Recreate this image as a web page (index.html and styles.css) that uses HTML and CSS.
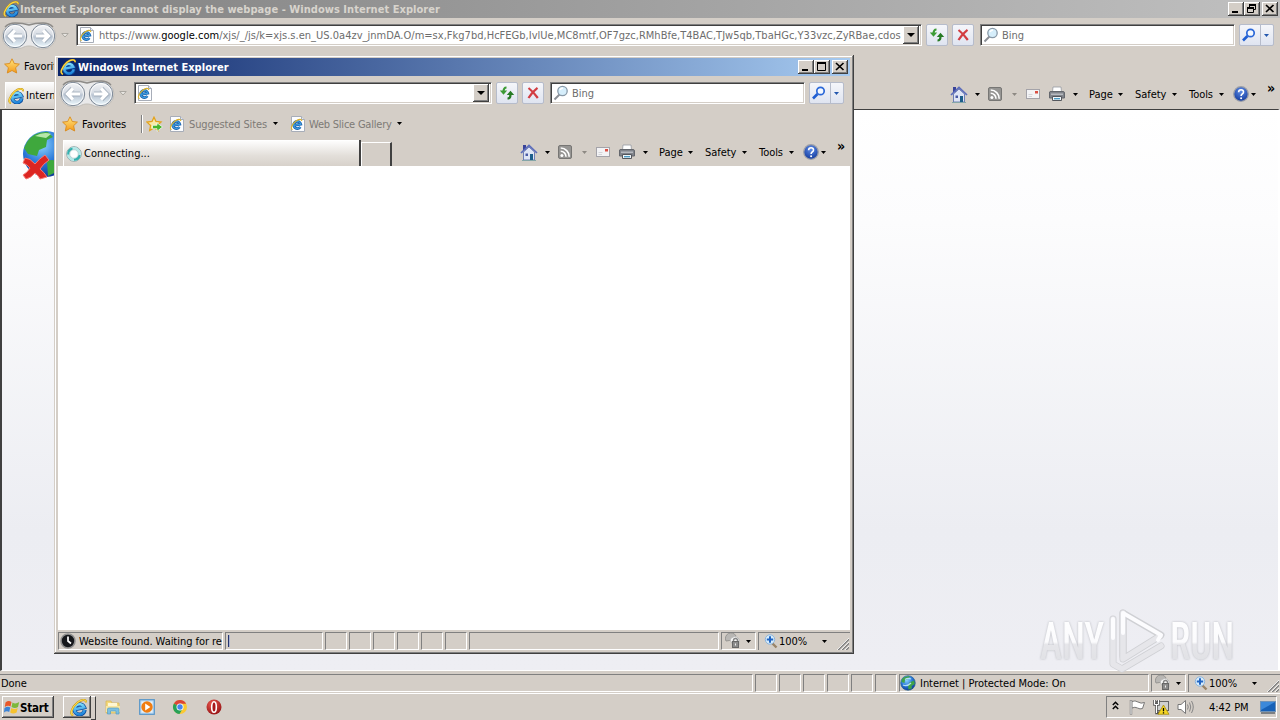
FILE: index.html
```html
<!DOCTYPE html>
<html lang="en">
<head>
<meta charset="utf-8">
<title>Windows Internet Explorer</title>
<link rel="stylesheet" href="styles.css">
</head>
<body>
<svg class="sprite" width="0" height="0" aria-hidden="true">
  <defs>
    <linearGradient id="gE" x1="0" y1="0" x2="0" y2="1"><stop offset="0" stop-color="#7fdcfb"/><stop offset="1" stop-color="#1f86dc"/></linearGradient>
    <linearGradient id="gBall" x1="0" y1="0" x2="0" y2="1"><stop offset="0" stop-color="#f4f5f7"/><stop offset=".45" stop-color="#d5dbe3"/><stop offset=".55" stop-color="#b9c4d2"/><stop offset="1" stop-color="#eefaff"/></linearGradient>
    <linearGradient id="gStar" x1="0" y1="0" x2="0" y2="1"><stop offset="0" stop-color="#ffe680"/><stop offset="1" stop-color="#f59a1a"/></linearGradient>
    <radialGradient id="gGlobe" cx=".4" cy=".3" r=".8"><stop offset="0" stop-color="#8fd4ff"/><stop offset=".5" stop-color="#2a78d8"/><stop offset="1" stop-color="#062a86"/></radialGradient>
    <radialGradient id="gHelp" cx=".5" cy=".3" r=".7"><stop offset="0" stop-color="#5f8de6"/><stop offset="1" stop-color="#123a9e"/></radialGradient>
    <radialGradient id="gOpera" cx=".4" cy=".3" r=".8"><stop offset="0" stop-color="#ee5a50"/><stop offset="1" stop-color="#8e0d10"/></radialGradient>
    <linearGradient id="gMark" x1="0" y1="0" x2="0" y2="1"><stop offset="0" stop-color="#ffffff"/><stop offset=".52" stop-color="#fbfbfd"/><stop offset=".56" stop-color="#e6e6ea"/><stop offset="1" stop-color="#dddee2"/></linearGradient>
  </defs>
  <symbol id="ie" viewBox="0 0 16 16">
    <g fill="none"><g transform="rotate(-12 8.500 9)"><path d="M13.400 11.300A4.800 4.800 0 1 1 13.500 8.900H4.500" stroke="#0a4a9a" stroke-width="3.700"/>
    <path d="M13.300 11.400A4.800 4.800 0 1 1 13.500 8.900H4.800" stroke="url(#gE)" stroke-width="2.400"/></g>
    <path d="M3 15.200C-.8 14.500 2 7.500 7 3.300C10.500.5 15 -.4 15.200 3.200" stroke="#b58b14" stroke-width="1.900"/>
    <path d="M3 15.200C-.8 14.500 2 7.500 7 3.300C10.500.5 15 -.4 15.200 3.200" stroke="#fbd645" stroke-width="1.200"/></g>
  </symbol>
  <symbol id="iepage" viewBox="0 0 16 16">
    <path d="M1.500.5H11.500L14.500 3.500V15.500H1.500Z" fill="#fcfdff" stroke="#a7adb8"/>
    <path d="M11.500.5V3.500H14.500" fill="#e4e8f0" stroke="#a7adb8"/>
    <g fill="none"><path d="M10.300 10.900A3.600 3.600 0 1 1 10.800 8.200L4 9.300" stroke="#155ba8" stroke-width="2.700"/><path d="M10.300 10.900A3.600 3.600 0 1 1 10.800 8.200L4 9.300" stroke="#3d9de0" stroke-width="1.200"/>
    <path d="M2.600 13.800C0 13 2 8 5.800 5.200C8.500 3.200 11.800 2.500 11.700 5" stroke="#dcb32c" stroke-width="1.200"/></g>
  </symbol>
  <symbol id="balls" viewBox="0 0 56 28">
    <path d="M14 1H42A13 13 0 0 1 42 27C34 27 34 24 28 24S22 27 14 27A13 13 0 0 1 14 1Z" fill="#e9e9ea" stroke="#c2beb8"/>
    <path d="M4 5Q8 1 14 1Q22 1 28 3Q34 1 42 1Q48 1 52 5" fill="none" stroke="#8d8b88" stroke-width="1.500"/>
    <g fill="url(#gBall)" stroke="#7c8794"><circle cx="14" cy="14" r="11.700"/><circle cx="42" cy="14" r="11.700"/></g>
    <g fill="none" stroke="#fff" stroke-width="1" opacity=".8"><circle cx="14" cy="14" r="10.500"/><circle cx="42" cy="14" r="10.500"/></g>
    <g fill="none" stroke="#8f9cab" stroke-width="5" opacity=".6"><path d="M21 14H9M13.500 8.500L8.500 14L13.500 19.500M35 14H47M42.500 8.500L47.500 14L42.500 19.500"/></g>
    <g fill="none" stroke="#fff" stroke-width="3.200"><path d="M21 14H9M14 8.500L8.500 14L14 19.500M35 14H47M42 8.500L47.500 14L42 19.500"/></g>
  </symbol>
  <symbol id="caret" viewBox="0 0 5 3"><path d="M0 0H5L2.500 3Z" fill="currentColor"/></symbol>
  <symbol id="bigcaret" viewBox="0 0 8 4"><path d="M0 0H8L4 4Z" fill="currentColor"/></symbol>
  <symbol id="hist" viewBox="0 0 8 5"><path d="M.8.5H7.200L4 4Z" fill="#e8e6e2" stroke="#aaa7a1"/></symbol>
  <symbol id="refresh" viewBox="0 0 16 16">
    <path d="M7.500 2.500Q4.500 2.500 4.500 7" fill="none" stroke="#3c9b35" stroke-width="2.200"/><path d="M.8 5.500H8.200L4.500 9.800Z" fill="#3c9b35"/>
    <path d="M8.500 13.500Q11.500 13.500 11.500 9.500" fill="none" stroke="#267a24" stroke-width="2.200"/><path d="M7.800 10H15.200L11.500 5.700Z" fill="#267a24"/>
  </symbol>
  <symbol id="stop" viewBox="0 0 16 16"><path d="M3.500 3Q8 6.500 12.800 13M12.500 2.800Q7 7 3.500 13" fill="none" stroke="#d23d42" stroke-width="2.200"/></symbol>
  <symbol id="lens" viewBox="0 0 16 16"><path d="M1.500 14.500L6.500 9.500" stroke="#8b8f96" stroke-width="2"/><circle cx="9.500" cy="6" r="4.700" fill="#d6eefb" stroke="#8899a8" stroke-width="1.300"/><path d="M7 5Q8 3 10 3" fill="none" stroke="#fff" stroke-width="1.500"/></symbol>
  <symbol id="find" viewBox="0 0 16 16"><path d="M2 13.500L6.500 9" stroke="#1f5ed2" stroke-width="2.600"/><circle cx="9.500" cy="6" r="3.700" fill="#f3f8ff" stroke="#2b68d8" stroke-width="1.700"/></symbol>
  <symbol id="star" viewBox="0 0 16 16"><path d="M8 .8L10.300 5.500L15.400 6.100L11.600 9.700L12.700 15L8 12.500L3.300 15L4.400 9.700L.6 6.100L5.700 5.500Z" fill="url(#gStar)" stroke="#d98a1d" stroke-width=".9"/></symbol>
  <symbol id="staradd" viewBox="0 0 17 16"><path d="M8 1.200L10 5.500L15 6.100L11.300 9.500L12.300 14.500L8 12L3.700 14.500L4.600 9.500L1 6.100L6 5.500Z" fill="#f9e9a6" stroke="#e3a21b" stroke-width="1.300"/><path d="M6.500 9.300H11V6.800L16.500 11L11 15.300V12.700H6.500Z" fill="#49b52c" stroke="#fff" stroke-width=".7"/></symbol>
  <symbol id="home" viewBox="0 0 18 17">
    <path d="M3 1H6V6H3Z" fill="#39439a"/><path d="M3.500 8L9 3L14.500 8V16H3.500Z" fill="#dfe5f5" stroke="#6f7fb6"/>
    <path d="M1 9L9 1.500L17 9" fill="none" stroke="#5b6cbb" stroke-width="1.700"/><path d="M10 10H13V16H10Z" fill="#1d5e8b"/><path d="M5.500 9.500H8V12H5.500Z" fill="#4a5aa5"/><path d="M2 16.500H16" stroke="#85a6a8"/>
  </symbol>
  <symbol id="rss" viewBox="0 0 16 16"><rect x="1.500" y="1.500" width="13" height="13" rx="1.500" fill="#969593" stroke="#777674"/><circle cx="4.900" cy="11.500" r="1.500" fill="#fff"/><path d="M3.700 7.300A5.300 5.300 0 0 1 9 12.700M3.700 4A8.600 8.600 0 0 1 12.200 12.700" fill="none" stroke="#fff" stroke-width="1.600"/></symbol>
  <symbol id="mail" viewBox="0 0 14 12"><rect x=".5" y="1.500" width="13" height="9" fill="#f3f3f5" stroke="#a4a3a9"/><path d="M9 3H12V5.500H9Z" fill="#da4f43"/><path d="M2.500 6.500H6.500M2.500 8.500H6" stroke="#d3d4d9"/></symbol>
  <symbol id="print" viewBox="0 0 18 16"><path d="M5 1H13L13.500 6H4.500Z" fill="#fff" stroke="#9599a1" stroke-width=".8"/><path d="M1.500 6Q1.500 5.500 3 5.500H15Q16.500 5.500 16.500 7V12H1.500Z" fill="#80848b" stroke="#64676d"/><path d="M3 8.200H15" stroke="#c6c9ce" stroke-width="1.200"/><path d="M4.500 10.500H13.500V14.500H4.500Z" fill="#f0f7fb" stroke="#54575d"/><path d="M6 12.700H12" stroke="#4396c1" stroke-width="1.300"/></symbol>
  <symbol id="help" viewBox="0 0 16 16"><circle cx="8" cy="8" r="7.300" fill="url(#gHelp)" stroke="#9c9fa8" stroke-width="1.300"/><path d="M5.600 6.200Q5.700 3.800 8.100 3.800T10.500 6Q10.500 7.200 9.200 8Q8.100 8.700 8.100 10" fill="none" stroke="#fff" stroke-width="1.600"/><circle cx="8.100" cy="12.200" r="1" fill="#fff"/></symbol>
  <symbol id="spin" viewBox="0 0 16 16"><circle cx="8" cy="8" r="7.300" fill="#e8f6f6" stroke="#8ea5a8" stroke-width="1"/><circle cx="8" cy="8" r="5.700" fill="none" stroke="#b4e9e8" stroke-width="2.400"/><path d="M2.300 8.500A5.700 5.700 0 0 1 6.500 2.500M13.600 9A5.700 5.700 0 0 1 8 13.700" fill="none" stroke="#35b0ae" stroke-width="2.200"/><circle cx="8" cy="8" r="4.300" fill="#fff" stroke="#9fc3c4" stroke-width=".7"/></symbol>
  <symbol id="clock" viewBox="0 0 16 16"><circle cx="8" cy="8" r="7" fill="#15171b" stroke="#8f8f8f" stroke-width="1.600"/><path d="M8 3.500V8L11 10.500" fill="none" stroke="#fff" stroke-width="1.700"/></symbol>
  <symbol id="lock" viewBox="0 0 16 16"><path d="M1 8A5.500 5.500 0 0 1 11 3L8 7Z" fill="#b9b7b4" stroke="#989693"/><path d="M5 7A5 5 0 0 1 14 6V12H8Z" fill="#f6f6f5" stroke="#bbb"/><path d="M8.500 8.500V7.500A2 2 0 0 1 12.500 7.500V8.500" fill="none" stroke="#858585" stroke-width="1.400"/><rect x="7.500" y="8.500" width="6" height="6" fill="#8b8b8b" stroke="#676767"/><path d="M10.500 10.500V12.500" stroke="#eee"/></symbol>
  <symbol id="zoomin" viewBox="0 0 14 15"><path d="M8 9L12.500 13.500" stroke="#9a8468" stroke-width="2.400"/><circle cx="6" cy="5.500" r="4.700" fill="#d9edfb" stroke="#8bb4dc"/><path d="M6 2.300V8.700M2.800 5.500H9.200" stroke="#2165c3" stroke-width="2"/></symbol>
  <symbol id="globe" viewBox="0 0 16 16"><circle cx="8" cy="8" r="7.300" fill="url(#gGlobe)" stroke="#1c5a8a" stroke-width=".6"/><path d="M2 4Q5 .6 10 1.300L8 4L5 5L4.500 8L1.500 7ZM9.500 7.500L14 5.500L14.800 9L11.500 11L12 13.300L8.500 14.500L8 10.500Z" fill="#3fa347"/><path d="M3 10Q7 12 11 8M5 4.500Q8 2.500 11 4" fill="none" stroke="#b2def6" stroke-width="1.200"/></symbol>
  <symbol id="grip" viewBox="0 0 12 12"><path d="M1 12L12 1M5 12L12 5M9 12L12 9" stroke="#808080" stroke-width="1.600"/><path d="M0 12L12 0M4 12L12 4M8 12L12 8" stroke="#fff" stroke-width=".8"/></symbol>
  <symbol id="min" viewBox="0 0 12 11"><path d="M2 9H8" stroke="#000" stroke-width="2"/></symbol>
  <symbol id="max" viewBox="0 0 12 11"><path d="M1.500 1V9.500H9.500V1" fill="none" stroke="#000"/><path d="M1 2H10" stroke="#000" stroke-width="2"/></symbol>
  <symbol id="restore" viewBox="0 0 12 11"><path d="M3.500 4V2.500H9.500V6.500H7M1.500 5V9.500H7.500V5" fill="none" stroke="#000"/><path d="M3 2H10M1 5H8" stroke="#000" stroke-width="2"/></symbol>
  <symbol id="close" viewBox="0 0 12 11"><path d="M2 2L9.500 9M9.500 2L2 9" stroke="#000" stroke-width="1.700"/></symbol>
</svg>

<main class="desktop">
  <section class="window back">
    <header class="title inactive"><svg class="i16"><use href="#ie"/></svg><b>Internet Explorer cannot display the webpage - Windows Internet Explorer</b>
      <span class="wb"><svg><use href="#min"/></svg></span><span class="wb"><svg><use href="#restore"/></svg></span><span class="wb last"><svg><use href="#close"/></svg></span></header>
    <div class="nav">
      <svg class="balls"><use href="#balls"/></svg><svg class="hist"><use href="#hist"/></svg>
      <div class="field address"><svg class="i16"><use href="#iepage"/></svg><span class="url">https://www.<i>google.com</i>/xjs/_/js/k=xjs.s.en_US.0a4zv_jnmDA.O/m=sx,Fkg7bd,HcFEGb,IvlUe,MC8mtf,OF7gzc,RMhBfe,T4BAC,TJw5qb,TbaHGc,Y33vzc,ZyRBae,cdos</span><span class="drop"><svg><use href="#bigcaret"/></svg></span></div>
      <span class="tool"><svg class="i16"><use href="#refresh"/></svg></span><span class="tool"><svg class="i16"><use href="#stop"/></svg></span>
      <div class="field search"><svg class="i16"><use href="#lens"/></svg><span class="hint">Bing</span></div>
      <span class="go"><svg class="i16"><use href="#find"/></svg><em><svg class="caret"><use href="#caret"/></svg></em></span>
    </div>
    <div class="favs"><svg class="i16"><use href="#star"/></svg><span class="favlabel">Favorites</span></div>
    <div class="tabs">
      <div class="tab"><svg class="i16"><use href="#ie"/></svg><span>Internet Explorer cannot display</span></div>
      <nav class="cmd">
        <svg class="home"><use href="#home"/></svg><svg class="caret m7"><use href="#caret"/></svg>
        <svg class="i16 m7"><use href="#rss"/></svg><svg class="caret m9 dim"><use href="#caret"/></svg>
        <svg class="mail"><use href="#mail"/></svg><svg class="print"><use href="#print"/></svg><svg class="caret m7"><use href="#caret"/></svg>
        <span class="page">Page</span><svg class="caret m3"><use href="#caret"/></svg>
        <span class="safety">Safety</span><svg class="caret m3"><use href="#caret"/></svg>
        <span class="tools">Tools</span><svg class="caret m4"><use href="#caret"/></svg>
        <svg class="i16 m9"><use href="#help"/></svg><svg class="caret m2"><use href="#caret"/></svg><b class="more">»</b>
      </nav>
    </div>
    <div class="content error">
      <svg class="noconn" viewBox="0 0 48 52"><circle cx="24" cy="24" r="23" fill="url(#gGlobe)"/><path d="M5 12Q12 1 26 2L31 7L25 10L24 17L17 20L15 26L6 24L2 18ZM25 31Q32 28 38 33L34 42L26 46Z" fill="#3fa83d"/><path d="M13 6Q22 1 29 4L24 8Z" fill="#d6f7c4" opacity=".8"/><path d="M3 28Q8 28 13 34Q17 29 23 25L27 30Q21 34 18 39Q22 42 25 47L18 49Q16 45 13 43Q9 48 4 49L1 45Q6 42 8 38Q5 34 1 33Z" fill="#dc2622" stroke="#f47b76" stroke-width="1"/></svg>
      <svg class="mark" viewBox="0 0 200 66">
        <g class="lettering" fill="url(#gMark)" font-family="Roboto" font-weight="500" font-size="52">
          <text transform="translate(2 51) scale(.6 1)" textLength="107" lengthAdjust="spacingAndGlyphs">ANY</text>
          <text transform="translate(132 51) scale(.6 1)" textLength="107" lengthAdjust="spacingAndGlyphs">RUN</text>
        </g>
        <g fill="none" stroke-linejoin="round" stroke-linecap="round"><path d="M75 11V56L84 61L123 38M85 48V5L123 27" stroke="#cfd0d4" stroke-width="7"/><path d="M85 5V51L122 28" stroke="#cfd0d4" stroke-width="7"/><path d="M75 11V56L84 61L123 38M85 5V51L122 28" stroke="#e6e6ea" stroke-width="5.500"/><path d="M85 25V5L123 27L120 32M75 30V11" stroke="#fcfcfe" stroke-width="4"/></g>
      </svg>
    </div>
    <footer class="status">
      <span class="cell first"><span>Done</span></span><span class="cell sm"></span><span class="cell sm"></span><span class="cell sm"></span><span class="cell sm"></span><span class="cell sm"></span><span class="cell sm"></span>
      <span class="cell zone"><svg class="i16"><use href="#globe"/></svg><span>Internet | Protected Mode: On</span></span>
      <span class="cell priv"><svg class="i16"><use href="#lock"/></svg><svg class="caret"><use href="#caret"/></svg></span>
      <span class="cell pct"><svg class="zin"><use href="#zoomin"/></svg><span>100%</span><svg class="caret"><use href="#caret"/></svg><svg class="grip"><use href="#grip"/></svg></span>
    </footer>
  </section>

  <section class="window front">
    <header class="title active"><svg class="i16"><use href="#ie"/></svg><b>Windows Internet Explorer</b>
      <span class="wb"><svg><use href="#min"/></svg></span><span class="wb"><svg><use href="#max"/></svg></span><span class="wb last"><svg><use href="#close"/></svg></span></header>
    <div class="nav">
      <svg class="balls"><use href="#balls"/></svg><svg class="hist"><use href="#hist"/></svg>
      <div class="field address"><svg class="i16"><use href="#iepage"/></svg><span class="url"></span><span class="drop"><svg><use href="#bigcaret"/></svg></span></div>
      <span class="tool"><svg class="i16"><use href="#refresh"/></svg></span><span class="tool"><svg class="i16"><use href="#stop"/></svg></span>
      <div class="field search"><svg class="i16"><use href="#lens"/></svg><span class="hint">Bing</span></div>
      <span class="go"><svg class="i16"><use href="#find"/></svg><em><svg class="caret"><use href="#caret"/></svg></em></span>
    </div>
    <div class="favs"><svg class="i16"><use href="#star"/></svg><span class="favlabel">Favorites</span>
      <span class="sep"></span><svg class="add"><use href="#staradd"/></svg>
      <svg class="i16 fav1"><use href="#iepage"/></svg><span class="link l1">Suggested Sites</span><svg class="caret"><use href="#caret"/></svg>
      <svg class="i16 fav2"><use href="#iepage"/></svg><span class="link l2">Web Slice Gallery</span><svg class="caret"><use href="#caret"/></svg>
    </div>
    <div class="tabs">
      <div class="tab"><svg class="i16"><use href="#spin"/></svg><span>Connecting...</span></div><div class="newtab"></div>
      <nav class="cmd">
        <svg class="home"><use href="#home"/></svg><svg class="caret m7"><use href="#caret"/></svg>
        <svg class="i16 m7"><use href="#rss"/></svg><svg class="caret m9 dim"><use href="#caret"/></svg>
        <svg class="mail"><use href="#mail"/></svg><svg class="print"><use href="#print"/></svg><svg class="caret m7"><use href="#caret"/></svg>
        <span class="page">Page</span><svg class="caret m3"><use href="#caret"/></svg>
        <span class="safety">Safety</span><svg class="caret m3"><use href="#caret"/></svg>
        <span class="tools">Tools</span><svg class="caret m4"><use href="#caret"/></svg>
        <svg class="i16 m9"><use href="#help"/></svg><svg class="caret m2"><use href="#caret"/></svg><b class="more">»</b>
      </nav>
    </div>
    <div class="content blank"></div>
    <footer class="status">
      <span class="cell msg"><svg class="i16"><use href="#clock"/></svg><span>Website found. Waiting for re</span></span><span class="cell prog"><i></i></span><span class="cell sm"></span><span class="cell sm"></span><span class="cell sm"></span><span class="cell sm"></span><span class="cell sm"></span><span class="cell sm"></span>
      <span class="cell zone"></span>
      <span class="cell priv"><svg class="i16"><use href="#lock"/></svg><svg class="caret"><use href="#caret"/></svg></span>
      <span class="cell pct"><svg class="zin"><use href="#zoomin"/></svg><span>100%</span><svg class="caret"><use href="#caret"/></svg><svg class="grip"><use href="#grip"/></svg></span>
    </footer>
  </section>

  <footer class="taskbar">
    <div class="start"><svg viewBox="0 0 16 16"><path d="M1.500 3.500Q4.500 1 7.500 3L6.500 7.500Q4 6 .8 8Z" fill="#e8582a"/><path d="M8.500 3.500Q11.500 5.500 15.200 3L14 8Q11 10 7.500 8Z" fill="#7cb83a"/><path d="M.5 9Q3.500 7 6.300 8.500L5.200 13Q2.500 11.500 0 13.500Z" fill="#3b83d6"/><path d="M7.300 9Q10.500 11 13.700 9L12.600 13.500Q9 15.500 6.200 13.500Z" fill="#f6c22e"/></svg><b>Start</b></div>
    <div class="ietask"><svg><use href="#ie"/></svg></div>
    <svg class="app a1" viewBox="0 0 16 16"><path d="M1 2H6L7 4H14V14H1Z" fill="#f4d97a" stroke="#d8b85a" stroke-width=".8"/><path d="M3 4H12V8H3Z" fill="#fff7d2"/><path d="M1 7H15V13H1Z" fill="#f7e6a2"/><path d="M2.500 15V10Q2.500 9 4 9H12.500Q14 9 14 10V15H11V12H5.500V15Z" fill="#7dbfe0" stroke="#559dc4" stroke-width=".7"/></svg>
    <svg class="app a2" viewBox="0 0 16 16"><rect x=".7" y=".7" width="14.600" height="14.600" fill="#b9d9f2" stroke="#5795c8" stroke-width="1.200"/><rect x="2.500" y="2.500" width="11" height="11" fill="#e9f3fa"/><circle cx="8" cy="8" r="5.700" fill="#f07d12"/><path d="M6.200 4.600L11.400 8L6.200 11.400Z" fill="#fff"/></svg>
    <svg class="app a3" viewBox="0 0 16 16"><circle cx="8" cy="8" r="7" fill="#fbc932"/><path d="M8 8L1.900 4.500A7 7 0 0 1 14.100 4.700H8Z" fill="#dc4437"/><path d="M8 8L1.900 4.500A7 7 0 0 0 7.500 15L10.500 10Z" fill="#28a158"/><circle cx="8" cy="8" r="3.500" fill="#fff"/><circle cx="8" cy="8" r="2.700" fill="#4785ed"/></svg>
    <svg class="app a4" viewBox="0 0 16 16"><circle cx="8" cy="8" r="7.500" fill="url(#gOpera)"/><ellipse cx="8" cy="8" rx="2.300" ry="5.300" fill="#a8191b" stroke="#fff" stroke-width="1.600"/></svg>
    <div class="tray">
      <svg class="up" viewBox="0 0 7 9"><path d="M.8 4L3.500 1.300L6.200 4M.8 8L3.500 5.300L6.200 8" fill="none" stroke="#000" stroke-width="1.500"/></svg>
      <svg class="flag" viewBox="0 0 17 16"><path d="M2 1V15.500" stroke="#777" stroke-width="2.400"/><path d="M3 2.500Q6 1 9 3T15.500 3.500L13.500 9.500Q11 10.500 8.500 9T3 9Z" fill="#fff" stroke="#777"/><path d="M2 1.500V15" stroke="#fff"/></svg>
      <svg class="net" viewBox="0 0 17 16"><rect x="3.500" y="2.500" width="12" height="9" fill="#d0d0ce" stroke="#656565"/><path d="M5 13.500H12" stroke="#666" stroke-width="2"/><path d="M1.500 1V5.500H5.500V1M3.500 5V14H6" fill="none" stroke="#555" stroke-width="2.500"/><path d="M1.500 1V5.500H5.500V1M3.500 5V14" fill="none" stroke="#fff"/><path d="M10.500 6L16 15.300H5Z" fill="#f5d623" stroke="#a08500" stroke-width=".7"/><path d="M10.500 9V12.300M10.500 13.200V14.400" stroke="#000" stroke-width="1.300"/></svg>
      <svg class="snd" viewBox="0 0 17 16"><path d="M1 5.500H4L8.500 1.500V14.500L4 10.500H1Z" fill="#fff" stroke="#777"/><path d="M10.500 5.500Q12 8 10.500 10.500M12.500 3.500Q15 8 12.500 12.500M14.500 2Q18 8 14.500 14" fill="none" stroke="#858585"/></svg>
      <span class="time">4:42 PM</span>
      <svg class="desk" viewBox="0 0 16 13"><rect x=".5" y=".5" width="15" height="10" fill="#1761b7" stroke="#6f93b8"/><path d="M1 1H15L1 9Z" fill="#3c89da"/><path d="M1 12H15" stroke="#60676e" stroke-width="1.500"/></svg>
    </div>
  </footer>
</main>
</body>
</html>
```

FILE: styles.css
```css
* { box-sizing: border-box; }
body { margin: 0; background: #d4cec7; color: #000; font: 11px/14px "DejaVu Sans Condensed", "DejaVu Sans", sans-serif; font-stretch: condensed; letter-spacing: -.04px; }
svg { display: block; flex: none; }
.sprite { position: absolute; }
i, em { font-style: normal; }
.desktop { position: relative; width: 1280px; height: 720px; overflow: hidden; background: #d4cec7; }
.window { display: flex; flex-direction: column; background: #d4cec7; }
.back { height: 693px; }
.front { position: absolute; left: 54px; top: 55px; width: 800px; height: 599px; padding: 3px 4px 3px 4px; box-shadow: inset -1px -1px #404040, inset 1px 1px #d4cec7, inset -2px -2px #808080, inset 2px 2px #fff; }
.i16 { width: 16px; height: 16px; }

.title { display: flex; align-items: center; height: 18px; flex: none; white-space: nowrap; letter-spacing: .04px; }
.title b { flex: 1; padding: 2px 0 0 1px; }
.title .i16 { margin-left: 3px; }
.active .i16 { margin-left: 2px; }
.inactive { background: linear-gradient(90deg, #808080, #c0c0c0); color: #d8d4cd; }
.active { background: linear-gradient(90deg, #0a246a, #a6caf0); color: #fff; }
.title.active b { padding-left: 2px; }
.wb { width: 16px; height: 14px; padding: 1px 0 0 2px; background: #d4cec7; box-shadow: inset -1px -1px #404040, inset 1px 1px #fff, inset -2px -2px #808080; }
.wb svg { width: 12px; height: 11px; }
.wb.last { margin: 0 2px; }

.nav { display: flex; height: 34px; padding: 6px 6px 0 0; flex: none; }
.balls { width: 56px; height: 28px; margin: -2px 0 0 1px; }
.hist { width: 8px; height: 5px; margin: 9px 7px 0 4px; }
.field { display: flex; align-items: center; height: 22px; background: #fff; border: 1px solid; border-color: #808080 #fff #fff #808080; box-shadow: inset 1px 1px #404040, inset -1px -1px #d4cec7; color: #6d6d6d; }
.address { flex: 1; min-width: 0; padding: 1px 2px; }
.url { flex: 1; min-width: 0; padding: 2px 0 0 4px; overflow: hidden; white-space: nowrap; letter-spacing: .02px; }
.url i { color: #000; }
.drop { display: grid; place-items: center; width: 16px; height: 18px; background: #d4cec7; color: #000; box-shadow: inset -1px -1px #404040, inset 1px 1px #fff, inset -2px -2px #808080; }
.drop svg { width: 8px; height: 4px; }
.tool, .go { display: flex; height: 22px; border: 1px solid #b6bccb; border-radius: 2px; background: linear-gradient(#f5f6fa, #dfe4f0); align-items: center; justify-content: center; }
.tool { width: 22px; margin-left: 4px; }
.search { width: 255px; margin-left: 6px; padding-left: 2px; }
.hint { padding: 2px 0 0 3px; }
.go { width: 35px; margin-left: 4px; }
.go em { display: grid; place-items: center; width: 13px; height: 20px; margin-left: 3px; border-left: 1px solid #b6bccb; color: #2357ae; }
.caret { width: 5px; height: 3px; }

.favs { display: flex; align-items: center; height: 30px; flex: none; white-space: nowrap; padding: 0 0 3px 4px; }
.favlabel { width: 58px; padding: 2px 0 0 4px; }
.sep { width: 1px; height: 18px; margin: 0 4px 0 5px; background: #808080; box-shadow: 1px 0 #fff; }
.add { width: 17px; height: 16px; }
.fav1 { margin-left: 6px; }
.fav2 { margin-left: 12px; }
.link { color: #7d7a76; padding: 3px 0 0 3px; letter-spacing: -.13px; }
.l1 { width: 88px; padding-left: 4px; }
.l2 { width: 91px; letter-spacing: -.22px; }

.tabs { display: flex; height: 26px; padding-left: 5px; flex: none; }
.tab { display: flex; align-items: center; width: 298px; border-right: 2px solid #404040; background: linear-gradient(#fff, #e3dfda 60%, #d7d1ca); box-shadow: inset 1px 1px #fff; padding: 1px 0 0 3px; white-space: nowrap; overflow: hidden; }
.tab span { padding: 1px 0 0 2px; letter-spacing: .02px; }
.newtab { width: 31px; height: 24px; margin: 2px 0 0; border: solid; border-width: 1px 2px 0 1px; border-color: #fff #404040 #fff #fff; }
.cmd { display: flex; align-items: center; height: 24px; margin-left: auto; }
.cmd span { padding-top: 2px; }
.home { width: 18px; height: 17px; }
.mail { width: 14px; height: 12px; margin-left: 9px; }
.print { width: 18px; height: 16px; margin-left: 8px; }
.m2 { margin-left: 2px; } .m3 { margin-left: 3px; } .m4 { margin-left: 4px; } .m7 { margin-left: 7px; } .m9 { margin-left: 9px; }
.dim { color: #8d8983; }
.page { width: 26px; margin-left: 11px; }
.safety { width: 34px; margin-left: 12px; }
.tools { width: 26px; margin-left: 12px; }
.more { width: 9px; margin: -13px 4px 0 11px; font-size: 14px; }

.content { flex: 1; min-height: 0; }
.error { position: relative; margin-top: 1px; border: solid; border-width: 1px 2px 1px 2px; border-color: #404040 #fff #fff #404040; background: linear-gradient(#fff 0, #fcfcfd 20%, #ecedf2 75%, #eeeef3); }
.blank { background: #fff; }
.noconn { width: 48px; height: 52px; margin: 20px 0 0 20px; }
.mark { position: absolute; left: 1036px; top: 498px; width: 200px; height: 66px; overflow: visible; }
.lettering { filter: drop-shadow(0 0 1px #b9bac0); }

.status { display: flex; gap: 2px; height: 21px; padding-top: 2px; flex: none; white-space: nowrap; }
.back .status { height: 22px; padding: 3px 0 1px; }
.cell { display: flex; align-items: center; height: 18px; border: 1px solid; border-color: #808080 #fff #fff #808080; overflow: hidden; flex: none; }
.cell span { padding-top: 1px; }
.first { flex: 1; border-left: 0; padding-left: 1px; }
.sm { width: 22px; }
.zone { width: 250px; }
.zone span { padding-left: 4px; }
.priv { width: 35px; padding-left: 3px; }
.priv .caret { margin-left: 5px; }
.pct { width: 92px; padding-left: 5px; border-right: 0; border-bottom: 0; }
.zin { width: 14px; height: 15px; }
.pct span { width: 30px; padding-left: 1px; }
.pct .caret { margin-left: 14px; }
.grip { width: 12px; height: 12px; margin: 5px 0 0 10px; }
.msg { width: 165px; padding-left: 1px; }
.cell.msg span { padding-left: 3px; }
.prog { width: 98px; padding-left: 2px; }
.prog i { width: 2px; height: 12px; background: #25346e; border-right: 1px solid #a9b3d0; }

.taskbar { display: flex; align-items: flex-start; height: 27px; padding: 3px 3px 0 2px; box-shadow: inset 0 1px #fff; }
.start, .ietask { display: flex; align-items: center; height: 22px; box-shadow: inset -1px -1px #404040, inset 1px 1px #fff, inset -2px -2px #808080; }
.start { width: 52px; padding-left: 2px; }
.start svg { width: 16px; height: 16px; }
.start b { font-size: 11.500px; padding-top: 1px; letter-spacing: -.2px; }
.ietask { width: 28px; margin-left: 9px; padding-left: 7px; position: relative; }
.ietask::after { content: ""; position: absolute; left: 28px; top: 0; width: 4px; height: 22px; border-top: 1px solid #fff; border-right: 1px solid #404040; border-bottom: 1px solid #404040; }
.ietask svg { width: 17px; height: 17px; }
.app { width: 16px; height: 16px; margin: 3px 0 0; }
.a1 { margin-left: 14px; }
.a2 { margin-left: 18px; }
.a3 { margin-left: 17px; }
.a4 { margin-left: 18px; }
.tray { display: flex; align-items: center; width: 171px; height: 22px; margin-left: auto; padding-left: 5px; border: 1px solid; border-color: #808080 #fff #fff #808080; }
.up { width: 7px; height: 9px; margin-top: -3px; }
.flag { width: 17px; height: 16px; margin-left: 10px; }
.net { width: 17px; height: 16px; margin-left: 7px; }
.snd { width: 17px; height: 16px; margin-left: 7px; }
.time { width: 50px; margin-left: 15px; padding-top: 1px; }
.desk { width: 16px; height: 13px; margin-left: 2px; }
```
